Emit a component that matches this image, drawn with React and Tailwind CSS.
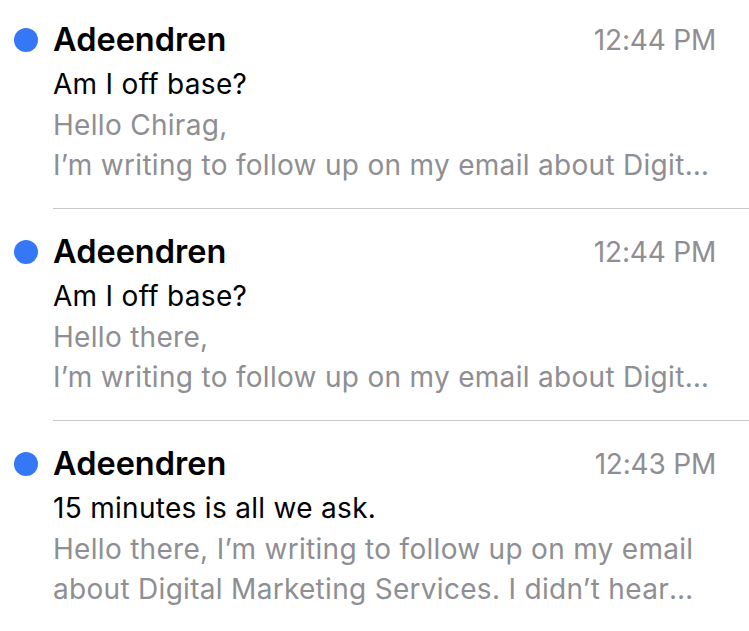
import React from 'react';

const emails = [
  {
    from: 'Adeendren',
    time: '12:44 PM',
    subject: 'Am I off base?',
    greeting: 'Hello Chirag,',
    body: 'I’m writing to follow up on my email about Digital Marketing Services. I didn’t hear back from you.',
  },
  {
    from: 'Adeendren',
    time: '12:44 PM',
    subject: 'Am I off base?',
    greeting: 'Hello there,',
    body: 'I’m writing to follow up on my email about Digital Marketing Services. I didn’t hear back from you.',
  },
  {
    from: 'Adeendren',
    time: '12:43 PM',
    subject: '15 minutes is all we ask.',
    body: 'Hello there, I’m writing to follow up on my email about Digital Marketing Services. I didn’t hear back from you, so I wanted to check in.',
  },
];

const EmailRow = ({ email }) => (
  <div className="flex">
    {/* unread dot */}
    <div className="w-[53px] flex-shrink-0 pl-[14px] pt-[31px]">
      <div className="w-[24px] h-[24px] rounded-full bg-[#3478f6]" />
    </div>

    <div className="flex-1 min-w-0 pt-[20px] pb-[23px] pr-[33px] border-b border-[#c8c7cc]">
      <div className="flex items-center justify-between h-[46px]">
        <span className="font-semibold text-[32.5px] text-black">{email.from}</span>
        <span className="text-[28px] text-[#8e8e93] tracking-[-0.2px]">{email.time}</span>
      </div>
      <div className="mt-px text-[28px] leading-[41px] tracking-[0.3px] text-black truncate">{email.subject}</div>
      {email.greeting ? (
        <div className="text-[28px] leading-[40px] tracking-[0.3px] text-[#8e8e93]">
          <div className="truncate">{email.greeting}</div>
          <div className="truncate">{email.body}</div>
        </div>
      ) : (
        <div className="text-[28px] leading-[40px] tracking-[0.3px] text-[#8e8e93] line-clamp-2">{email.body}</div>
      )}
    </div>
  </div>
);

export default function App() {
  return (
    <div className="w-[749px] h-[631px] bg-white overflow-hidden" style={{ fontFamily: 'Inter, "Noto Sans", sans-serif' }}>
      <div className="-mt-[3px]">
        {emails.map((e, i) => (
          <EmailRow key={i} email={e} />
        ))}
      </div>
    </div>
  );
}
